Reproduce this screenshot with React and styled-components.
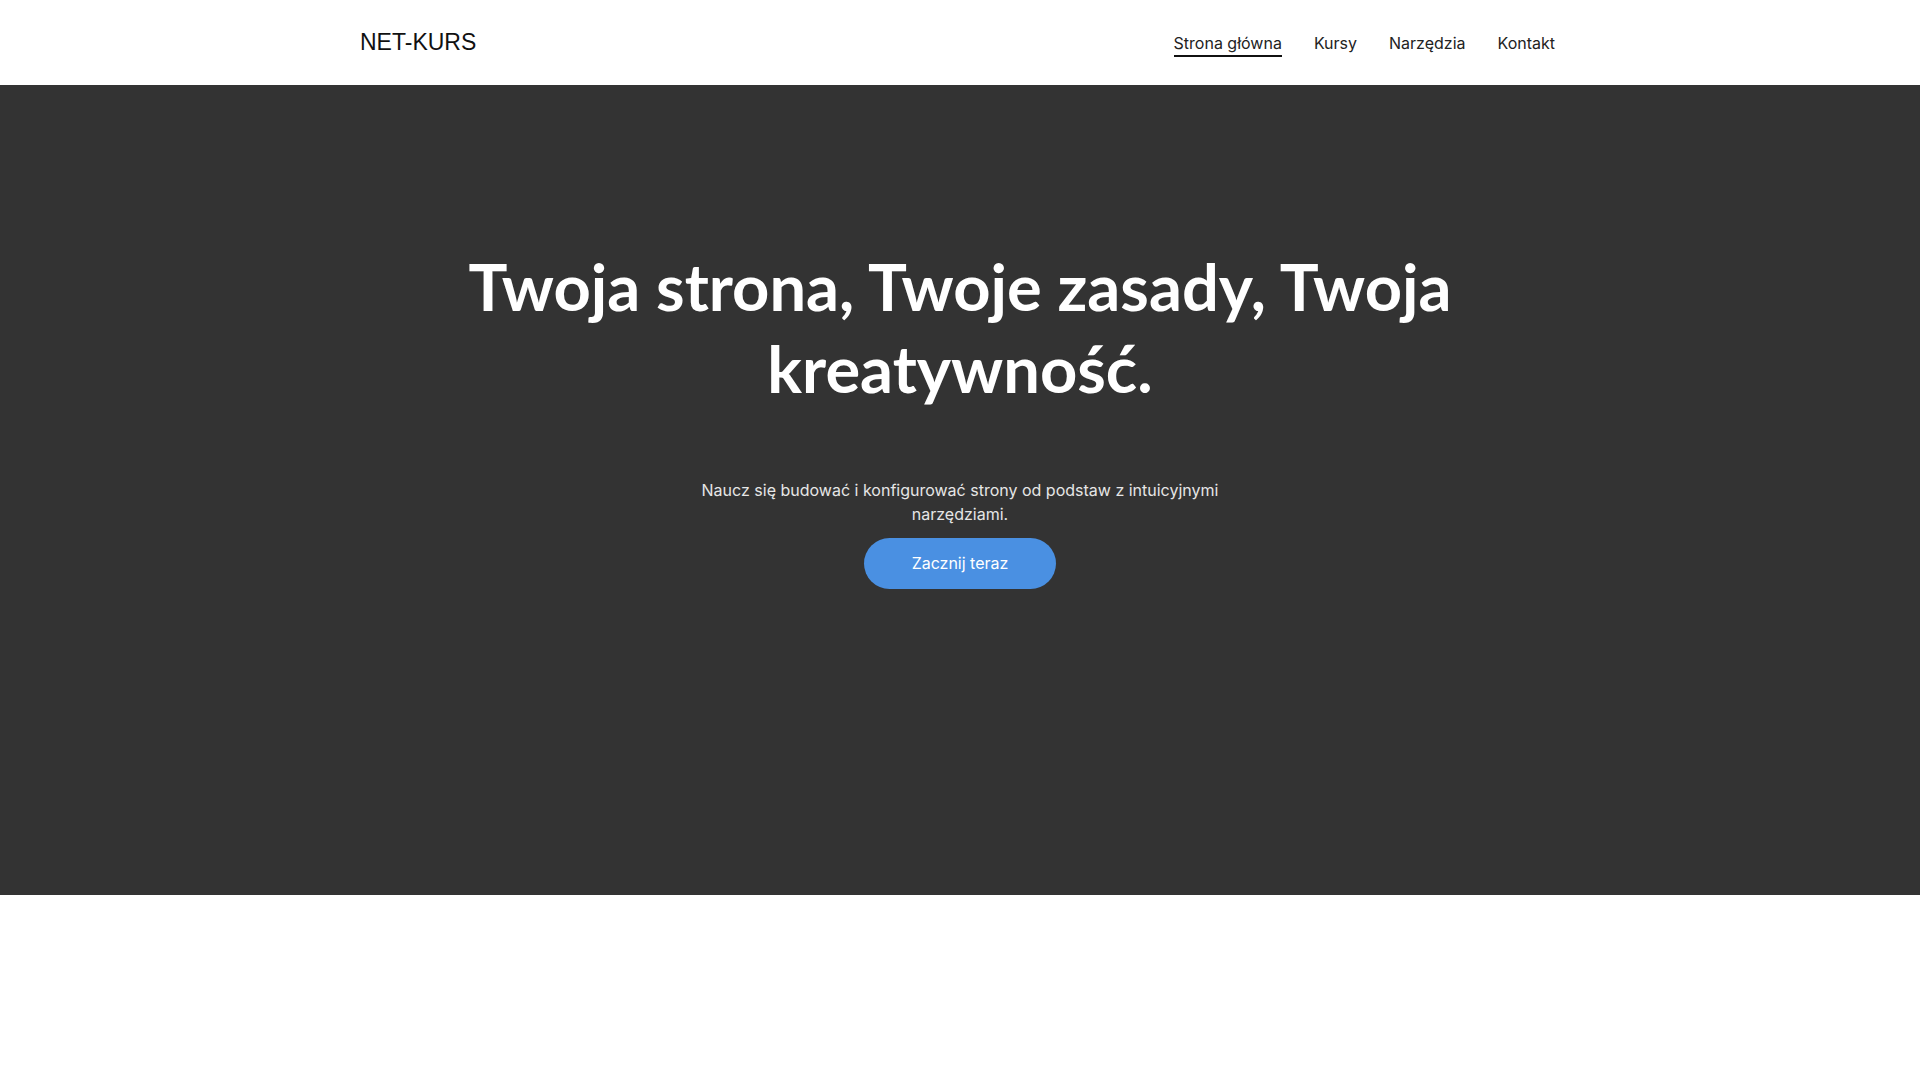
import React from 'react';
import styled, { createGlobalStyle } from 'styled-components';

const GlobalStyle = createGlobalStyle`
    * {
        box-sizing: border-box;
    }
    html {
        overflow-y: scroll;
    }
    html, body {
        margin: 0;
        padding: 0;
        background: #ffffff;
    }
    body {
        font-family: Inter, "Noto Sans", sans-serif;
        color: #111111;
    }
    ::-webkit-scrollbar {
        width: 10px;
    }
    ::-webkit-scrollbar-track {
        background: #ffffff;
    }
    ::-webkit-scrollbar-thumb {
        background: #111111;
        border-radius: 6px;
        border: 2px solid #ffffff;
    }
`;

const Header = styled.header`
    height: 85px;
    background: #ffffff;
`;

const HeaderInner = styled.div`
    max-width: 1200px;
    height: 100%;
    margin: 0 auto;
    padding-right: 5px;
    display: flex;
    justify-content: space-between;
    align-items: center;
`;

const Logo = styled.a`
    font-family: "Liberation Sans", Arial, sans-serif;
    font-size: 23px;
    font-weight: 400;
    color: #111111;
    text-decoration: none;
`;

const Nav = styled.nav`
    display: flex;
    gap: 32px;
`;

const NavLink = styled.a`
    font-size: 16px;
    color: #222222;
    text-decoration: none;
    padding: 4px 0 2px;
    border-bottom: 2px solid ${props => props.$active ? '#111111' : 'transparent'};
`;

const Hero = styled.section`
    height: 810px;
    background: #333333;
    display: flex;
    flex-direction: column;
    align-items: center;
    padding-top: 160px;
    text-align: center;
`;

const Title = styled.h1`
    max-width: 1000px;
    margin: 0 0 69px 0;
    font-family: Lato, "Noto Sans", sans-serif;
    font-size: 65px;
    font-weight: 700;
    line-height: 82px;
    color: #ffffff;
`;

const Lead = styled.p`
    max-width: 560px;
    margin: 0 0 12px 0;
    font-size: 16px;
    line-height: 24px;
    color: #e6e6e6;
`;

const CtaButton = styled.a`
    display: inline-block;
    padding: 15px 48px;
    border-radius: 30px;
    background: #4a90e2;
    color: #ffffff;
    font-size: 16px;
    line-height: 21px;
    text-decoration: none;
`;

const Rest = styled.div`
    height: 4300px;
    background: #ffffff;
`;

const links = ['Strona główna', 'Kursy', 'Narzędzia', 'Kontakt'];

const App = () => {
    return (
        <>
            <GlobalStyle />
            <Header>
                <HeaderInner>
                    <Logo href="#">NET-KURS</Logo>
                    <Nav>
                        {links.map((link, i) => (
                            <NavLink key={link} href="#" $active={i === 0}>{link}</NavLink>
                        ))}
                    </Nav>
                </HeaderInner>
            </Header>
            <Hero>
                <Title>Twoja strona, Twoje zasady, Twoja kreatywność.</Title>
                <Lead>Naucz się budować i konfigurować strony od podstaw z intuicyjnymi narzędziami.</Lead>
                <CtaButton href="#">Zacznij teraz</CtaButton>
            </Hero>
            <Rest />
        </>
    );
}

export default App;
